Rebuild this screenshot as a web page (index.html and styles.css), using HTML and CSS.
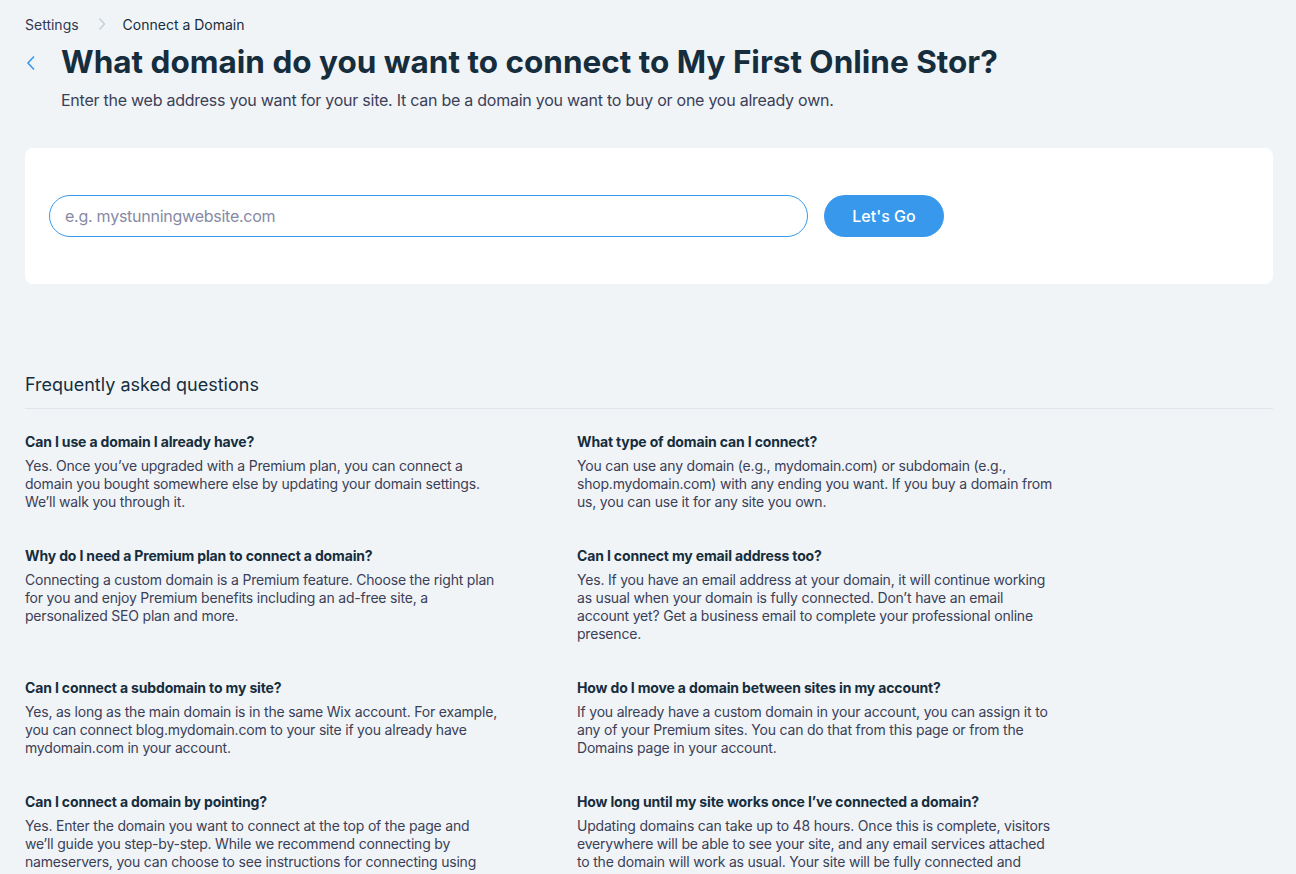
FILE: index.html
```html
<!DOCTYPE html>
<html lang="en">
<head>
    <meta charset="UTF-8">
    <meta name="viewport" content="width=device-width, initial-scale=1.0">
    <title>Connect a Domain</title>
    <link rel="stylesheet" href="styles.css">
</head>
<body>
    <div class="page">
        <nav class="breadcrumbs">
            <a href="#" class="crumb">Settings</a>
            <svg class="crumb-sep" width="8" height="14" viewBox="0 0 8 14"><path d="M1.5 1.5 L6.5 7 L1.5 12.5" fill="none" stroke="#c1c9d1" stroke-width="1.2"/></svg>
            <span class="crumb current">Connect a Domain</span>
        </nav>
        <header class="page-header">
            <a href="#" class="back" aria-label="Back">
                <svg width="12" height="18" viewBox="0 0 12 18"><path d="M9 2.5 L3 9 L9 15.5" fill="none" stroke="#3899ec" stroke-width="1.6"/></svg>
            </a>
            <h1>What domain do you want to connect to My First Online Stor?</h1>
        </header>
        <p class="subtitle">Enter the web address you want for your site. It can be a domain you want to buy or one you already own.</p>

        <section class="card">
            <form class="search" onsubmit="event.preventDefault()">
                <input type="text" class="domain-input" placeholder="e.g. mystunningwebsite.com">
                <button type="submit" class="go">Let's Go</button>
            </form>
        </section>

        <section class="faq">
            <h2>Frequently asked questions</h2>
            <div class="faq-grid">
                <div class="faq-item">
                    <h3>Can I use a domain I already have?</h3>
                    <p>Yes. Once you’ve upgraded with a Premium plan, you can connect a domain you bought somewhere else by updating your domain settings. We’ll walk you through it.</p>
                </div>
                <div class="faq-item">
                    <h3>What type of domain can I connect?</h3>
                    <p>You can use any domain (e.g., mydomain.com) or subdomain (e.g., shop.mydomain.com) with any ending you want. If you buy a domain from us, you can use it for any site you own.</p>
                </div>
                <div class="faq-item">
                    <h3>Why do I need a Premium plan to connect a domain?</h3>
                    <p>Connecting a custom domain is a Premium feature. Choose the right plan for you and enjoy Premium benefits including an ad-free site, a personalized SEO plan and more.</p>
                </div>
                <div class="faq-item">
                    <h3>Can I connect my email address too?</h3>
                    <p>Yes. If you have an email address at your domain, it will continue working as usual when your domain is fully connected. Don’t have an email account yet? Get a business email to complete your professional online presence.</p>
                </div>
                <div class="faq-item">
                    <h3>Can I connect a subdomain to my site?</h3>
                    <p>Yes, as long as the main domain is in the same Wix account. For example, you can connect blog.mydomain.com to your site if you already have mydomain.com in your account.</p>
                </div>
                <div class="faq-item">
                    <h3>How do I move a domain between sites in my account?</h3>
                    <p>If you already have a custom domain in your account, you can assign it to any of your Premium sites. You can do that from this page or from the Domains page in your account.</p>
                </div>
                <div class="faq-item">
                    <h3>Can I connect a domain by pointing?</h3>
                    <p>Yes. Enter the domain you want to connect at the top of the page and we’ll&nbsp;guide you step-by-step. While we recommend connecting by nameservers, you can choose to see instructions for connecting using pointing (A records) instead.</p>
                </div>
                <div class="faq-item">
                    <h3>How long until my site works once I’ve connected a domain?</h3>
                    <p>Updating domains can take up to 48 hours. Once this is complete, visitors everywhere will be able to see your site, and any email services attached to the domain will work as usual. Your site will be fully connected and live&nbsp;on your new domain.</p>
                </div>
            </div>
        </section>
    </div>
</body>
</html>
```

FILE: styles.css
```css
:root {
    --bg: #f0f4f7;
    --title: #162d3d;
    --text: #3b4057;
    --blue: #3899ec;
    --line: #dfe5eb;
}
body {
    margin: 0;
    background-color: var(--bg);
    font-family: Inter, "Liberation Sans", sans-serif;
    color: var(--title);
}
.page {
    padding: 14px 23px 40px 25px;
}
.breadcrumbs {
    display: flex;
    align-items: center;
    height: 20px;
    font-size: 14px;
}
.crumb {
    color: #333853;
    text-decoration: none;
}
.crumb-sep {
    margin: 0 17px 0 19px;
}
.crumb.current {
    color: var(--title);
}
.page-header {
    display: flex;
    align-items: center;
    margin-top: 8px;
}
.back {
    display: flex;
    width: 36px;
    margin-top: 2px;
}
h1 {
    margin: 0;
    font-size: 31.5px;
    line-height: 40px;
    font-weight: 700;
    color: var(--title);
}
.subtitle {
    margin: 6px 0 0 36px;
    font-size: 16px;
    line-height: 24px;
    letter-spacing: -0.25px;
    color: var(--text);
}
.card {
    margin-top: 36px;
    background: #fff;
    border-radius: 8px;
    padding: 47px 24px;
}
.search {
    display: flex;
    gap: 16px;
}
.domain-input {
    width: 759px;
    height: 42px;
    box-sizing: border-box;
    border: 1px solid var(--blue);
    border-radius: 21px;
    padding: 0 15px;
    font-family: inherit;
    font-size: 16px;
    letter-spacing: -0.25px;
    color: var(--title);
    outline: none;
}
.domain-input::placeholder {
    color: #868aa5;
}
.go {
    width: 120px;
    height: 42px;
    border: none;
    border-radius: 21px;
    background: var(--blue);
    color: #fff;
    font-family: inherit;
    font-size: 16px;
    font-weight: 500;
    cursor: pointer;
}
.faq {
    margin-top: 89px;
}
.faq h2 {
    margin: 0;
    padding-bottom: 11px;
    border-bottom: 1px solid var(--line);
    font-size: 18px;
    line-height: 24px;
    font-weight: 400;
    color: var(--title);
}
.faq-grid {
    display: grid;
    grid-template-columns: 552px 552px;
    row-gap: 36px;
    margin-top: 24px;
}
.faq-item {
    max-width: 478px;
}
.faq-item h3 {
    margin: 0;
    font-size: 14px;
    line-height: 18px;
    font-weight: 700;
    letter-spacing: -0.15px;
    color: var(--title);
}
.faq-item p {
    margin: 6px 0 0;
    font-size: 14px;
    line-height: 18px;
    letter-spacing: -0.2px;
    color: var(--text);
}
```
